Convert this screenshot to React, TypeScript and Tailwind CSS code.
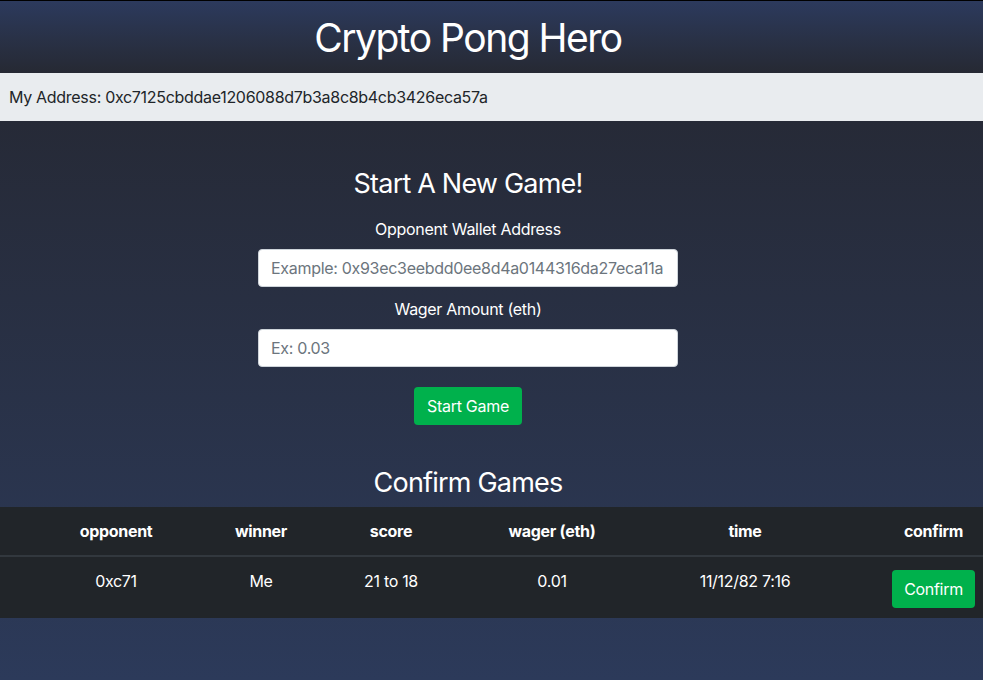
import React from "react";

const cols = "grid-cols-[40px_152px_138px_122px_200px_186px_145px]";

export default function App() {
  return (
    <div
      className="w-[983px] h-[680px] overflow-hidden flex flex-col text-white tracking-[-0.3px]"
      style={{ fontFamily: "Inter, 'Noto Sans', sans-serif" }}
    >
      <header className="h-[73px] shrink-0 border-t border-black bg-gradient-to-b from-[#2c3a5d] to-[#262933] flex items-center justify-center pr-[47px]">
        <h1 className="text-[39px] font-normal leading-none tracking-[-1.5px]">Crypto Pong Hero</h1>
      </header>
      <div className="h-[48px] shrink-0 bg-[#e9ecef] text-[#212529] flex items-center pl-[9px] text-[16px]">
        My Address: 0xc7125cbddae1206088d7b3a8c8b4cb3426eca57a
      </div>
      <main className="flex-1 bg-gradient-to-b from-[#262a37] to-[#2c3a5a] flex flex-col">
        <section className="flex flex-col items-center pr-[47px] pt-[47px]">
          <h3 className="text-[27px] leading-[32px] font-normal tracking-[-0.8px]">Start A New Game!</h3>
          <label className="mt-[19px] text-[16px] leading-[20px]">Opponent Wallet Address</label>
          <input
            className="mt-[10px] w-[420px] h-[38px] rounded-[4px] bg-white border border-[#ced4da] px-[12px] text-[16px] text-[#495057] placeholder:text-[#6c757d] outline-none tracking-[-0.3px]"
            placeholder="Example: 0x93ec3eebdd0ee8d4a0144316da27eca11a"
          />
          <label className="mt-[12px] text-[16px] leading-[20px]">Wager Amount (eth)</label>
          <input
            className="mt-[10px] w-[420px] h-[38px] rounded-[4px] bg-white border border-[#ced4da] px-[12px] text-[16px] text-[#495057] placeholder:text-[#6c757d] outline-none tracking-[-0.3px]"
            placeholder="Ex: 0.03"
          />
          <button className="mt-[20px] w-[108px] h-[38px] rounded-[4px] bg-[#00b14c] text-white text-[16px]">
            Start Game
          </button>
          <h3 className="mt-[40px] text-[27px] leading-[36px] font-normal tracking-[-0.8px]">Confirm Games</h3>
        </section>
        <div className="mt-[6px] bg-[#212529] text-[16px]">
          <div className={`grid ${cols} h-[50px] items-center font-bold text-center border-b-2 border-[#32383e]`}>
            <div />
            <div>opponent</div>
            <div>winner</div>
            <div>score</div>
            <div>wager (eth)</div>
            <div>time</div>
            <div className="flex justify-end pr-[8px]">
              <span className="w-[83px] text-center">confirm</span>
            </div>
          </div>
          <div className={`grid ${cols} h-[61px] items-start text-center pt-[12px]`}>
            <div />
            <div className="leading-[24px]">0xc71</div>
            <div className="leading-[24px]">Me</div>
            <div className="leading-[24px]">21 to 18</div>
            <div className="leading-[24px]">0.01</div>
            <div className="leading-[24px]">11/12/82 7:16</div>
            <div className="flex justify-end pr-[8px]">
              <button className="w-[83px] h-[38px] rounded-[4px] bg-[#00b14c] text-white text-[16px] mt-[1px]">
                Confirm
              </button>
            </div>
          </div>
        </div>
      </main>
    </div>
  );
}
